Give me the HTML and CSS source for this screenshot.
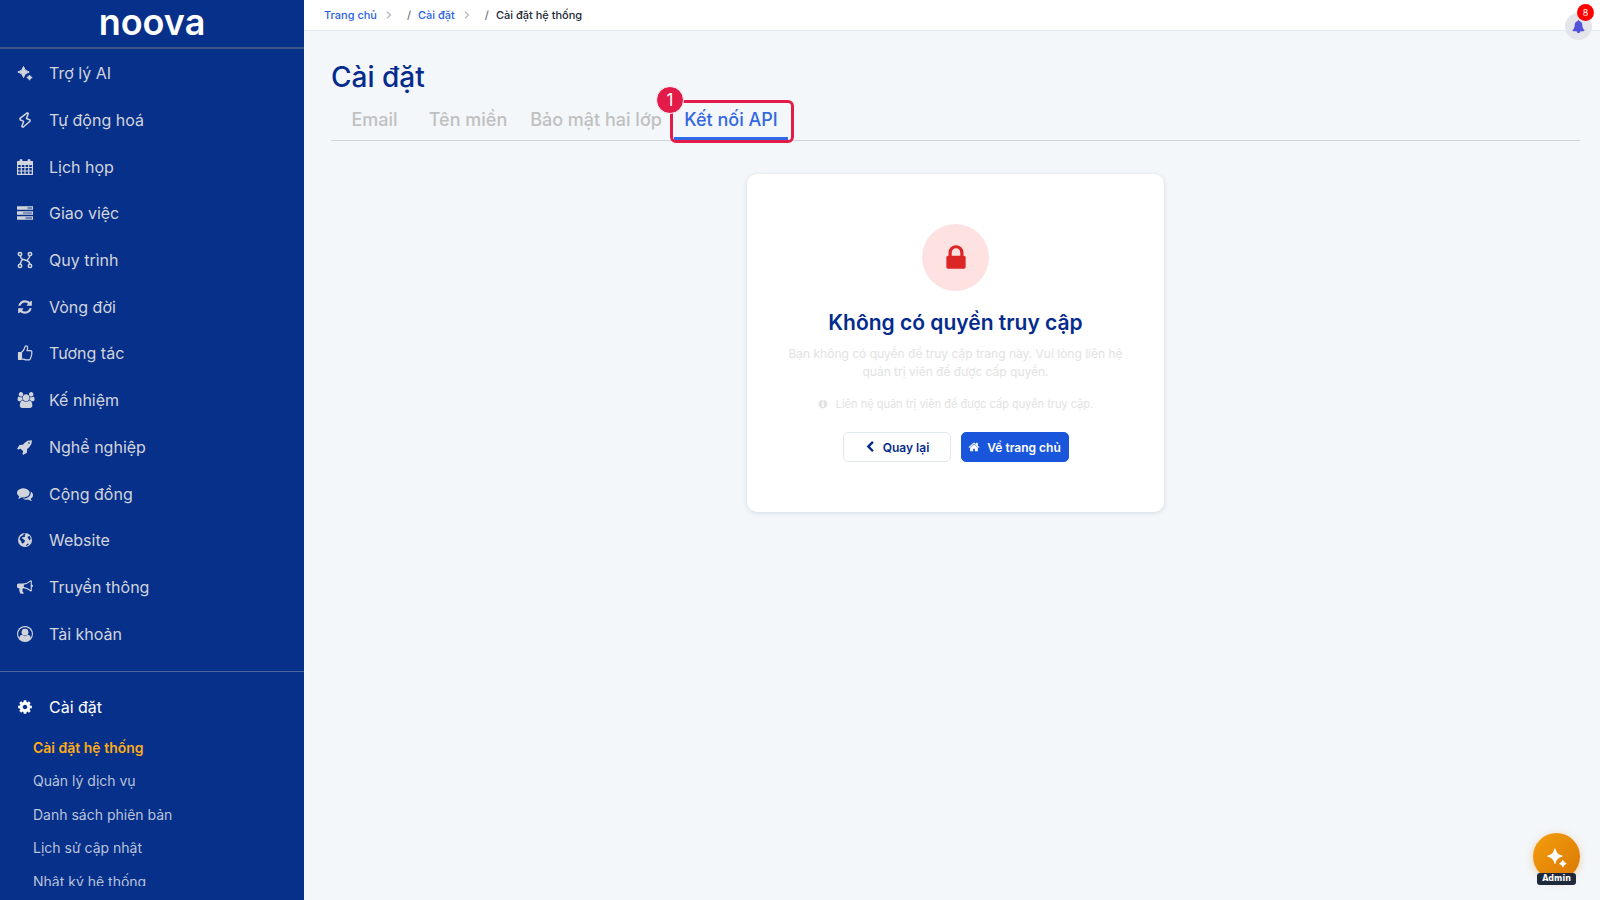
FILE: index.html
```html
<!DOCTYPE html>
<html lang="vi">

<head>
    <title>Cài đặt hệ thống</title>
    <meta charset="utf-8" />
    <meta name="viewport" content="width=device-width, initial-scale=1.0" />
    <link rel="stylesheet" href="styles.css">
</head>

<body>
    <div class="page">
        <aside class="sidebar">
            <a class="logo" href="#">noova</a>
            <nav class="menu">
                <ul class="menu-list">
                    <li><a class="menu-item" href="#">
                        <svg class="icon" viewBox="0 0 16 16"><path d="M6.500 1.500Q7.400 6.100 12.200 7 7.400 7.900 6.500 12.500 5.600 7.900.8 7 5.600 6.100 6.500 1.500zM12.500 10q.5 2 2.700 2.500-2.200.5-2.700 2.700-.5-2.200-2.700-2.700 2.200-.5 2.700-2.500z" stroke="currentColor" stroke-linejoin="round"/></svg>
                        Trợ lý AI</a></li>
                    <li><a class="menu-item" href="#">
                        <svg class="icon line" viewBox="0 0 16 16"><path d="M10.200.8 3 6.300 3.200 7.800 6.600 9.400 4.800 14.600 6 15.200 13 9.300V8L9.500 6.500 11.300 1.500z"/></svg>
                        Tự động hoá</a></li>
                    <li><a class="menu-item" href="#">
                        <svg class="icon thin" viewBox="0 0 16 16"><path d="M.6 2.500h14.800v3H.6zM3.200.8h1.600v3H3.200zM11.200.8h1.600v3h-1.600z" fill="currentColor"/><path d="M.6 3h14.800v12.400H.6zM.6 8.500h14.800M.6 12h14.800M4.300 5.500v10M8 5.500v10M11.700 5.500v10"/></svg>
                        Lịch họp</a></li>
                    <li><a class="menu-item" href="#">
                        <svg class="icon" viewBox="0 0 16 16"><path fill-rule="evenodd" d="M0 1.200h16v3.600H0zM10.500 2.500h4.500v1h-4.500zM0 6.200h16v3.600H0zM8.500 11.200"/><path fill-rule="evenodd" d="M0 11.200h16v3.600H0zM8.500 12.500h6.500v1H8.500z"/><path class="cut half" d="M6 7.200h9v1.600H6z"/></svg>
                        Giao việc</a></li>
                    <li><a class="menu-item" href="#">
                        <svg class="icon line" viewBox="0 0 16 16"><circle cx="3" cy="2.100" r="1.700"/><circle cx="13" cy="2.100" r="1.700"/><circle cx="3" cy="13.900" r="1.700"/><circle cx="13" cy="13.900" r="1.700"/><path d="M3.500 3.800C3.800 8.200 5.500 7 8 8s4.500.5 4.700 4.200M12.700 3.800C12.500 6 12 6.500 10.300 8M3.300 12.200C3.500 10 4 9.500 5.500 7.300"/></svg>
                        Quy trình</a></li>
                    <li><a class="menu-item" href="#">
                        <svg class="icon" viewBox="0 0 1792 1792"><path d="M1639 1056q0 5-1 7-64 268-268 434.500t-478 166.500q-146 0-282.500-55t-243.500-157l-129 129q-19 19-45 19t-45-19-19-45v-448q0-26 19-45t45-19h448q26 0 45 19t19 45-19 45l-137 137q71 66 161 102t187 36q134 0 250-65t186-179q11-17 53-117 8-23 30-23h192q13 0 22.500 9.500t9.500 22.500zm25-800v448q0 26-19 45t-45 19h-448q-26 0-45-19t-19-45 19-45l138-138q-148-137-349-137-134 0-250 65t-186 179q-11 17-53 117-8 23-30 23h-199q-13 0-22.500-9.500t-9.500-22.500v-7q65-268 270-434.500t480-166.500q146 0 284 55.500t245 156.500l130-129q19-19 45-19t45 19 19 45z"/></svg>
                        Vòng đời</a></li>
                    <li><a class="menu-item" href="#">
                        <svg class="icon thin" viewBox="0 0 16 16"><path d="M1.500 7.500h2.700v6.800H1.500z" fill="currentColor"/><path d="M4.500 7.300C6.800 6 7 4.500 7.500 3 7.800 1.600 8.200.9 9 .9c1.400 0 1.900 1.300 1.600 2.600L10 5.600h3.400c1.600 0 1.900 1.400 1.200 2.300.5.900.3 1.800-.3 2.400.3.900 0 1.700-.6 2.200.1 1.400-.9 2.400-2.500 2.400H9.500c-1.800 0-3-1-5-1z"/></svg>
                        Tương tác</a></li>
                    <li><a class="menu-item" href="#">
                        <svg class="icon wide" viewBox="0 0 1920 1792"><path d="M657 896q-162 5-265 128h-134q-82 0-138-40.500t-56-118.500q0-353 124-353 6 0 43.500 21t97.500 42.500 119 21.500q67 0 133-23-5 37-5 66 0 139 81 256zm1071 637q0 120-73 189.500t-194 69.500h-874q-121 0-194-69.500t-73-189.500q0-53 3.500-103.500t14-109 26.500-108.500 43-97.500 62-81 85.500-53.500 111.500-20q10 0 43 21.500t73 48 107 48 135 21.500 135-21.500 107-48 73-48 43-21.500q61 0 111.500 20t85.500 53.500 62 81 43 97.500 26.500 108.500 14 109 3.500 103.500zm-1024-1277q0 106-75 181t-181 75-181-75-75-181 75-181 181-75 181 75 75 181zm704 384q0 159-112.500 271.500t-271.500 112.500-271.500-112.500-112.500-271.500 112.500-271.500 271.500-112.500 271.500 112.500 112.500 271.500zm576 225q0 78-56 118.500t-138 40.500h-134q-103-123-265-128 81-117 81-256 0-29-5-66 66 23 133 23 59 0 119-21.500t97.500-42.500 43.500-21q124 0 124 353zm-128-609q0 106-75 181t-181 75-181-75-75-181 75-181 181-75 181 75 75 181z"/></svg>
                        Kế nhiệm</a></li>
                    <li><a class="menu-item" href="#">
                        <svg class="icon" viewBox="0 0 1792 1792"><path d="M1440 448q0-40-28-68t-68-28-68 28-28 68 28 68 68 28 68-28 28-68zm224-288q0 249-75.500 430.500t-253.500 360.500q-81 80-195 176l-20 379q-2 16-16 26l-384 224q-7 4-16 4-12 0-23-9l-64-64q-13-14-8-32l85-276-281-281-276 85q-3 1-9 1-14 0-23-9l-64-64q-17-19-5-39l224-384q10-14 26-16l379-20q96-114 176-195 188-187 358-258t431-71q14 0 24 9.500t10 22.500z"/></svg>
                        Nghề nghiệp</a></li>
                    <li><a class="menu-item" href="#">
                        <svg class="icon" viewBox="0 0 1792 1792"><path d="M1408 768q0 139-94 257t-256.500 186.500-353.500 68.500q-86 0-176-16-124 88-278 128-36 9-86 16h-3q-11 0-20.500-8t-11.500-21q-1-3-1-6.500t.5-6.500 2-6l2.500-5 3.500-5.500 4-5 4.500-5 4-4.500q5-6 23-25t26-29.500 22.500-29 25-38.500 20.500-44q-124-72-195-177t-71-224q0-139 94-257t256.500-186.500 353.500-68.500 353.500 68.500 256.500 186.500 94 257zm384 256q0 120-71 224.500t-195 176.500q10 24 20.500 44t25 38.500 22.500 29 26 29.500 23 25q1 1 4 4.500t4.500 5 4 5 3.500 5.500l2.500 5 2 6 .5 6.500-1 6.500q-3 14-13 22t-22 7q-50-7-86-16-154-40-278-128-90 16-176 16-271 0-472-132 58 4 88 4 161 0 309-45t264-129q125-92 192-212t67-254q0-77-23-152 129 71 204 178t75 230z"/></svg>
                        Cộng đồng</a></li>
                    <li><a class="menu-item" href="#">
                        <svg class="icon" viewBox="0 0 16 16"><circle cx="8" cy="8" r="7"/><path class="cut" d="M9 1.500 7.500 3.200 8.500 4 7 5.200 5.500 5 5 6.500 6.500 7.300 8 8.500 7.500 10 6 11.500 4.500 11 4.200 9 2.500 7.500 3.500 4.500 6 3.200 7 1.500zM10.500 5 12.500 3.800 13.800 6.500 13 8.500 11.500 7zM9 13l2-1.500 1 .8-2.500 1.700z"/></svg>
                        Website</a></li>
                    <li><a class="menu-item" href="#">
                        <svg class="icon" viewBox="0 0 1792 1792"><path d="M1664 640q53 0 90.500 37.500t37.500 90.500-37.500 90.500-90.500 37.500v384q0 52-38 90t-90 38q-417-347-812-380-58 19-91 66t-31 100.500 40 92.500q-20 33-23 65.500t6 58 33.500 55 48 50 61.500 50.500q-29 58-111.500 83t-168.500 11.500-132-55.500q-7-23-29.500-87.500t-32-94.500-23-89-15-101 3.500-98.500 22-110.500h-122q-66 0-113-47t-47-113v-192q0-66 47-113t113-47h480q435 0 896-384 52 0 90 38t38 90v384zm-128 604v-954q-394 302-768 343v270q377 42 768 341z"/></svg>
                        Truyền thông</a></li>
                    <li><a class="menu-item" href="#">
                        <svg class="icon" viewBox="0 0 16 16"><circle cx="8" cy="8" r="8"/><path class="cut" d="M8 1.200a6.800 6.800 0 0 0-5.700 10.500c.4-1.800 1.400-2.900 3-2.900a3.800 3.800 0 0 0 5.400 0c1.600 0 2.600 1.100 3 2.900A6.800 6.800 0 0 0 8 1.200z"/><circle cx="8" cy="6.200" r="3.400"/></svg>
                        Tài khoản</a></li>
                </ul>
                <div class="menu-setting">
                    <a class="menu-item on" href="#">
                        <svg class="icon" viewBox="0 0 1792 1792"><path d="M1152 896q0-106-75-181t-181-75-181 75-75 181 75 181 181 75 181-75 75-181zm512-109v222q0 12-8 23t-20 13l-185 28q-19 54-39 91 35 50 107 138 10 12 10 25t-9 23q-27 37-99 108t-94 71q-12 0-26-9l-138-108q-44 23-91 38-16 136-29 186-7 28-36 28h-222q-14 0-24.500-8.500t-11.500-21.500l-28-184q-49-16-90-37l-141 107q-10 9-25 9-14 0-25-11-126-114-165-168-7-10-7-23 0-12 8-23 15-21 51-66.500t54-70.500q-27-50-41-99l-183-27q-13-2-21-12.500t-8-23.500v-222q0-12 8-23t19-13l186-28q14-46 39-92-40-57-107-138-10-12-10-24 0-10 9-23 26-36 98.500-107.500t94.500-71.500q13 0 26 10l138 107q44-23 91-38 16-136 29-186 7-28 36-28h222q14 0 24.500 8.500t11.500 21.500l28 184q49 16 90 37l142-107q9-9 24-9 13 0 25 10 129 119 165 170 7 8 7 22 0 12-8 23-15 21-51 66.500t-54 70.500q26 50 41 98l183 28q13 2 21 12.500t8 23.500z"/></svg>
                        Cài đặt</a>
                    <ul class="sub-list">
                        <li><a class="active" href="#">Cài đặt hệ thống</a></li>
                        <li><a href="#">Quản lý dịch vụ</a></li>
                        <li><a href="#">Danh sách phiên bản</a></li>
                        <li><a href="#">Lịch sử cập nhật</a></li>
                        <li><a href="#">Nhật ký hệ thống</a></li>
                    </ul>
                </div>
            </nav>
        </aside>

        <div class="main">
            <header class="topbar">
                <nav class="breadcrumb">
                    <a href="#">Trang chủ</a>
                    <svg class="angle" viewBox="0 0 6 8"><path d="M1 .8 4.500 4 1 7.200"/></svg>
                    <span class="slash">/</span>
                    <a href="#">Cài đặt</a>
                    <svg class="angle" viewBox="0 0 6 8"><path d="M1 .8 4.500 4 1 7.200"/></svg>
                    <span class="slash">/</span>
                    <span>Cài đặt hệ thống</span>
                </nav>
            </header>

            <main class="content">
                <h1>Cài đặt</h1>
                <div class="tabs" role="tablist">
                    <button class="tab" role="tab">Email</button>
                    <button class="tab" role="tab">Tên miền</button>
                    <button class="tab" role="tab">Bảo mật hai lớp</button>
                    <button class="tab active" role="tab" aria-selected="true">Kết nối API
                        <span class="mark"><span class="mark-num">1</span></span>
                    </button>
                </div>

                <section class="card">
                    <div class="lock">
                        <svg viewBox="0 0 1792 1792"><path d="M640 768h512v-192q0-106-75-181t-181-75-181 75-75 181v192zm832 96v576q0 40-28 68t-68 28h-960q-40 0-68-28t-28-68v-576q0-40 28-68t68-28h32v-192q0-184 132-316t316-132 316 132 132 316v192h32q40 0 68 28t28 68z"/></svg>
                    </div>
                    <h2>Không có quyền truy cập</h2>
                    <p class="desc">Bạn không có quyền để truy cập trang này. Vui lòng liên hệ<br>quản trị viên để được cấp quyền.</p>
                    <p class="note">
                        <svg viewBox="0 0 1792 1792"><path d="M1152 1376v-160q0-14-9-23t-23-9h-96v-512q0-14-9-23t-23-9h-320q-14 0-23 9t-9 23v160q0 14 9 23t23 9h96v320h-96q-14 0-23 9t-9 23v160q0 14 9 23t23 9h448q14 0 23-9t9-23zm-128-896v-160q0-14-9-23t-23-9h-192q-14 0-23 9t-9 23v160q0 14 9 23t23 9h192q14 0 23-9t9-23zm640 416q0 209-103 385.500t-279.500 279.500-385.500 103-385.500-103-279.500-279.500-103-385.500 103-385.500 279.500-279.500 385.500-103 385.500 103 279.500 279.500 103 385.500z"/></svg>
                        Liên hệ quản trị viên để được cấp quyền truy cập.
                    </p>
                    <div class="btns">
                        <button class="btn">
                            <svg viewBox="0 0 1792 1792"><path d="M1427 301l-531 531 531 531q19 19 19 45t-19 45l-166 166q-19 19-45 19t-45-19l-742-742q-19-19-19-45t19-45l742-742q19-19 45-19t45 19l166 166q19 19 19 45t-19 45z"/></svg>
                            Quay lại</button>
                        <button class="btn primary">
                            <svg viewBox="0 0 1792 1792"><path d="M1472 992v480q0 26-19 45t-45 19h-384v-384h-256v384h-384q-26 0-45-19t-19-45v-480q0-1 .5-3t.5-3l575-474 575 474q1 2 1 6zm223-69l-62 74q-8 9-21 11h-3q-13 0-21-7l-692-577-692 577q-12 8-24 7-13-2-21-11l-62-74q-8-10-7-23.500t11-21.500l719-599q32-26 76-26t76 26l244 204v-195q0-14 9-23t23-9h192q14 0 23 9t9 23v408l219 182q10 8 11 21.500t-7 23.500z"/></svg>
                            Về trang chủ</button>
                    </div>
                </section>
            </main>
        </div>
    </div>

    <button class="bell" aria-label="Thông báo">
        <svg viewBox="0 0 1792 1792"><path d="M1728 1408q0 52-38 90t-90 38h-448q0 106-75 181t-181 75-181-75-75-181h-448q-52 0-90-38t-38-90q50-42 91-88t85-119.500 74.500-158.500 50-206 19.500-260q0-152 117-282.500t307-158.500q-8-19-8-39 0-40 28-68t68-28 68 28 28 68q0 20-8 39 190 28 307 158.500t117 282.500q0 139 19.500 260t50 206 74.500 158.500 85 119.500 91 88z"/></svg>
        <span class="bell-num">8</span>
    </button>

    <button class="assistant">
        <svg viewBox="0 0 24 24"><path d="M9.500 2.500Q10.800 9.600 18 11 10.800 12.400 9.500 19.500 8.200 12.400 1 11 8.200 9.600 9.500 2.500zM19 16.500q.7 2.800 3.500 3.500-2.800.7-3.500 3.500-.7-2.800-3.500-3.500 2.800-.7 3.500-3.500z" stroke="currentColor" stroke-width="1.500" stroke-linejoin="round"/></svg>
        <span class="assistant-name">Admin</span>
    </button>
</body>

</html>
```

FILE: styles.css
```css
html,
body {
    width: 100%;
    height: 100%;
    margin: 0;
}

body,
button {
    font-family: Inter, "Noto Sans", sans-serif;
}

ul {
    list-style: none;
    margin: 0;
    padding: 0;
}

a {
    text-decoration: none;
}

button {
    cursor: pointer;
}

svg {
    display: block;
    fill: currentColor;
    overflow: visible;
}

.page {
    display: flex;
    height: 100%;
    background-color: #f3f7fa;
    overflow: hidden;
}

/* sidebar */
.sidebar {
    flex: none;
    display: flex;
    flex-direction: column;
    width: 304px;
    box-sizing: border-box;
    padding-bottom: 14px;
    background-color: #07308b;
}

.logo {
    flex: none;
    height: 47px;
    line-height: 44px;
    border-bottom: 2px solid #3d5886;
    color: #fff;
    font-size: 36px;
    font-weight: 600;
    text-align: center;
}

.menu {
    flex: 1;
    min-height: 0;
    overflow: hidden;
}

.menu-list {
    display: grid;
    grid-auto-rows: 1fr;
    height: 607px;
    padding: 1px 0 14px;
    border-bottom: 1px solid #4d659a;
}

.menu-item {
    display: flex;
    align-items: center;
    gap: 16px;
    height: 100%;
    padding-left: 17px;
    color: #d1d5db;
    font-size: 16px;
}

.menu-item.on {
    height: 46px;
    color: #fff;
}

.icon {
    flex: none;
    width: 16px;
    height: 16px;
}

.icon.wide {
    width: 17px;
    margin-right: -1px;
}

.icon.line,
.icon.thin {
    fill: none;
    stroke: currentColor;
    stroke-width: 1.5;
    stroke-linejoin: round;
}

.icon.thin {
    stroke-width: 1.2;
}

.icon .cut {
    fill: #07308b;
}

.icon .half {
    opacity: 0.5;
}

.menu-setting {
    padding-top: 12px;
}

.sub-list {
    display: grid;
    grid-auto-rows: 1fr;
    height: 167px;
    padding-top: 1px;
}

.sub-list a {
    display: block;
    padding-left: 33px;
    line-height: 33px;
    color: #b9c3da;
    font-size: 14px;
}

.sub-list a.active {
    color: #fbab18;
    font-weight: 600;
}

/* main */
.main {
    flex: 1;
    min-width: 0;
}

.topbar {
    height: 30px;
    border-bottom: 1px solid #e5eaf1;
    background-color: #fff;
}

.breadcrumb {
    display: flex;
    align-items: center;
    height: 29px;
    padding-left: 20px;
    color: #212936;
    font-size: 11px;
    font-weight: 500;
}

.breadcrumb a {
    color: #2a62e0;
}

.angle {
    width: 6px;
    height: 8px;
    margin: 0 15px 0 9px;
    fill: none;
    stroke: #b5bac4;
    stroke-width: 1.3;
}

.slash {
    margin-right: 7px;
    color: #6c757d;
}

.content {
    padding: 26px 20px 0 27px;
}

h1 {
    margin: 0;
    line-height: 40px;
    color: #052c8d;
    font-size: 28px;
    font-weight: 500;
}

.tabs {
    display: grid;
    grid-template-columns: 87px 100px 156px 114px;
    height: 43px;
    border-bottom: 1px solid #ced4da;
}

.tab {
    position: relative;
    padding: 4px 0 0;
    border: 0;
    border-bottom: 3px solid transparent;
    background: none;
    color: #c0c0c0;
    font-size: 18px;
    font-weight: 500;
    white-space: nowrap;
}

.tab.active {
    border-bottom-color: #2f6be6;
    color: #3468e0;
}

.mark {
    position: absolute;
    top: 3px;
    right: -6px;
    bottom: -6px;
    left: -4px;
    border: 3px solid #e31b48;
    border-radius: 6px;
}

.mark-num {
    position: absolute;
    top: -17px;
    left: -17px;
    width: 26px;
    height: 26px;
    line-height: 26px;
    border: 1px solid #f3f7fa;
    border-radius: 50%;
    background-color: #e31b48;
    color: #fff;
    font-size: 17px;
    font-weight: 400;
    text-align: center;
}

.card {
    display: flex;
    flex-direction: column;
    align-items: center;
    box-sizing: border-box;
    width: 417px;
    margin: 33px auto 0;
    padding: 50px 20px;
    border-radius: 10px;
    background-color: #fff;
    box-shadow: 0 1px 5px rgba(20, 50, 90, 0.14);
}

.lock {
    display: flex;
    align-items: center;
    justify-content: center;
    width: 67px;
    height: 67px;
    border-radius: 50%;
    background-color: #fee2e2;
    color: #dc2626;
}

.lock svg {
    width: 30px;
    height: 30px;
}

h2 {
    margin: 18px 0 8px;
    line-height: 28px;
    color: #052c8d;
    font-size: 21px;
    font-weight: 600;
}

.desc {
    margin: 0 0 13px;
    line-height: 18px;
    color: #e2e2e2;
    font-size: 12px;
    text-align: center;
}

.note {
    display: flex;
    align-items: center;
    gap: 8px;
    margin: 0 0 18px;
    line-height: 20px;
    color: #e2e2e2;
    font-size: 11px;
}

.note svg {
    width: 10px;
    height: 10px;
}

.btns {
    display: flex;
    gap: 10px;
}

.btn {
    display: flex;
    align-items: center;
    justify-content: center;
    gap: 7px;
    width: 108px;
    height: 30px;
    padding: 0;
    border: 1px solid #e2e8f0;
    border-radius: 5px;
    background-color: #fff;
    color: #052c8d;
    font-size: 12px;
    font-weight: 600;
    white-space: nowrap;
}

.btn svg {
    width: 12px;
    height: 12px;
}

.btn.primary {
    border-color: #1a56db;
    background-color: #1a56db;
    color: #fff;
}

/* floating buttons */
.bell {
    position: fixed;
    top: 13px;
    right: 8px;
    display: flex;
    align-items: center;
    justify-content: center;
    width: 27px;
    height: 27px;
    padding: 0;
    border: 0;
    border-radius: 50%;
    background-color: #e3e5ea;
    color: #5353d8;
}

.bell svg {
    width: 13px;
    height: 13px;
}

.bell-num {
    position: absolute;
    top: -9px;
    right: -2px;
    width: 17px;
    height: 17px;
    line-height: 17px;
    border-radius: 50%;
    background-color: #f00;
    color: #fff;
    font-size: 9px;
}

.assistant {
    position: fixed;
    right: 20px;
    bottom: 20px;
    display: flex;
    align-items: center;
    justify-content: center;
    width: 47px;
    height: 47px;
    padding: 0;
    border: 0;
    border-radius: 50%;
    background: linear-gradient(135deg, #f59e0b, #d97706);
    box-shadow: 0 2px 8px rgba(217, 119, 6, 0.3);
    color: #fff;
}

.assistant svg {
    width: 20px;
    height: 20px;
}

.assistant-name {
    position: absolute;
    bottom: -5px;
    left: 4px;
    width: 39px;
    height: 12px;
    line-height: 12px;
    border-radius: 3px;
    background-color: #1e293b;
    font-family: "DejaVu Sans", sans-serif;
    font-size: 8px;
    font-weight: 700;
}
```
